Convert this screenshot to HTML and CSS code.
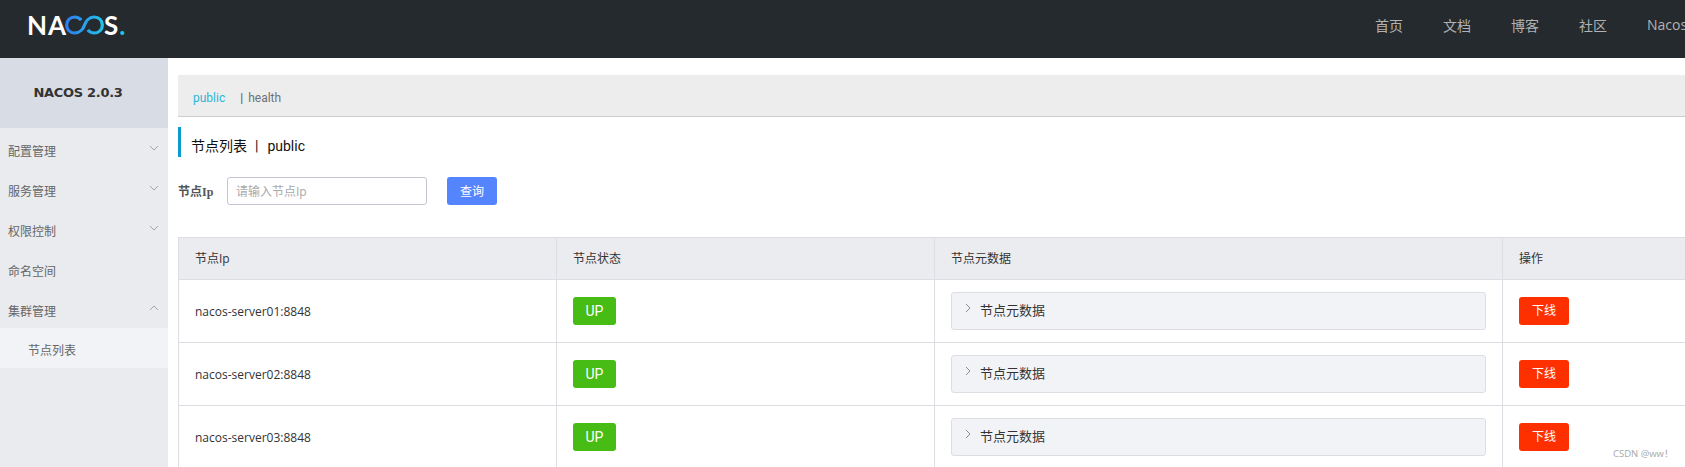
FILE: index.html
```html
<!DOCTYPE html>
<html lang="en">
<head>
  <meta charset="UTF-8">
  <meta name="viewport" content="width=device-width, initial-scale=1.0">
  <title>Nacos</title>
  <link rel="stylesheet" href="styles.css">
</head>
<body>
  <header class="topbar">
    <div class="logo">
      <span class="logo-text">NA</span>
      <svg class="logo-mark" width="39" height="20" viewBox="0 0 36 20" preserveAspectRatio="none" fill="none" aria-hidden="true">
        <defs>
          <linearGradient id="logoGrad" x1="0" y1="0" x2="36" y2="0" gradientUnits="userSpaceOnUse">
            <stop offset="0" stop-color="#2f7bf0"/>
            <stop offset="1" stop-color="#22c4e6"/>
          </linearGradient>
        </defs>
        <path d="M15 5.2C13.600 3.400 11.600 2 9 2 4.800 2 1.500 5.500 1.500 10S4.800 18 9 18c5 0 8-4.500 9-8s4-8 9-8c4.200 0 7.500 3.500 7.500 8s-3.300 8-7.500 8c-2.600 0-4.600-1.400-6-3.200" stroke="url(#logoGrad)" stroke-width="3"/>
      </svg>
      <span class="logo-text">S<span class="logo-dot">.</span></span>
    </div>
    <nav class="topnav">
      <a>首页</a>
      <a>文档</a>
      <a>博客</a>
      <a>社区</a>
      <a>Nacos</a>
    </nav>
  </header>

  <div class="page">
    <aside class="sidebar">
      <div class="version">NACOS 2.0.3</div>
      <ul class="menu">
        <li class="menu-item">配置管理<svg class="chev" width="10" height="6" viewBox="0 0 10 6"><path d="M1 1l4 4 4-4" fill="none" stroke="#a0a4ab"/></svg></li>
        <li class="menu-item">服务管理<svg class="chev" width="10" height="6" viewBox="0 0 10 6"><path d="M1 1l4 4 4-4" fill="none" stroke="#a0a4ab"/></svg></li>
        <li class="menu-item">权限控制<svg class="chev" width="10" height="6" viewBox="0 0 10 6"><path d="M1 1l4 4 4-4" fill="none" stroke="#a0a4ab"/></svg></li>
        <li class="menu-item">命名空间</li>
        <li class="menu-item">集群管理<svg class="chev" width="10" height="6" viewBox="0 0 10 6"><path d="M1 5l4-4 4 4" fill="none" stroke="#a0a4ab"/></svg></li>
        <li class="menu-sub">节点列表</li>
      </ul>
    </aside>

    <main class="content">
      <div class="crumbs">
        <span class="crumb-active">public</span>
        <span class="crumb-sep">|</span>
        <span class="crumb">health</span>
      </div>

      <h2 class="page-title">节点列表<span class="title-sep">|</span>public</h2>

      <form class="search">
        <label class="search-label">节点Ip</label>
        <input class="search-input" type="text" placeholder="请输入节点Ip">
        <button class="btn btn-query" type="button">查询</button>
      </form>

      <table class="nodes">
        <colgroup>
          <col class="col-ip">
          <col class="col-state">
          <col class="col-meta">
          <col>
        </colgroup>
        <thead>
          <tr>
            <th>节点Ip</th>
            <th>节点状态</th>
            <th>节点元数据</th>
            <th>操作</th>
          </tr>
        </thead>
        <tbody>
          <tr>
            <td>nacos-server01:8848</td>
            <td><span class="btn btn-up">UP</span></td>
            <td><div class="meta"><svg width="6" height="10" viewBox="0 0 6 10"><path d="M1 1l4 4-4 4" fill="none" stroke="#8a8e95"/></svg>节点元数据</div></td>
            <td><span class="btn btn-off">下线</span></td>
          </tr>
          <tr>
            <td>nacos-server02:8848</td>
            <td><span class="btn btn-up">UP</span></td>
            <td><div class="meta"><svg width="6" height="10" viewBox="0 0 6 10"><path d="M1 1l4 4-4 4" fill="none" stroke="#8a8e95"/></svg>节点元数据</div></td>
            <td><span class="btn btn-off">下线</span></td>
          </tr>
          <tr>
            <td>nacos-server03:8848</td>
            <td><span class="btn btn-up">UP</span></td>
            <td><div class="meta"><svg width="6" height="10" viewBox="0 0 6 10"><path d="M1 1l4 4-4 4" fill="none" stroke="#8a8e95"/></svg>节点元数据</div></td>
            <td><span class="btn btn-off">下线</span></td>
          </tr>
        </tbody>
      </table>
    </main>
  </div>

  <div class="watermark">CSDN @ww！</div>
</body>
</html>
```

FILE: styles.css
```css
* {
  box-sizing: border-box;
}
html, body {
  height: 467px;
  overflow: hidden;
}
body {
  margin: 0;
  font-family: "Open Sans", "Noto Sans CJK SC", sans-serif;
  font-size: 12px;
  color: #333;
  background: #fff;
}

.topbar {
  display: flex;
  align-items: center;
  height: 58px;
  padding-left: 27px;
  background: #252a2f;
  overflow: hidden;
}
.logo {
  display: flex;
  align-items: center;
  width: 1348px;
  flex-shrink: 0;
  margin-top: -9px;
}
.logo-text {
  font-family: Lato, sans-serif;
  font-size: 26px;
  font-weight: 700;
  color: #fff;
  letter-spacing: 1px;
  line-height: 20px;
}
.logo-dot {
  color: #22c4e6;
}
.logo-mark {
  margin: 0 0 0 -2px;
}
.topnav {
  display: flex;
  gap: 40px;
  flex-shrink: 0;
  margin-top: -9px;
}
.topnav a {
  font-size: 14px;
  color: #b3b3b3;
  white-space: nowrap;
}

.page {
  display: flex;
  height: 409px;
}
.sidebar {
  width: 168px;
  flex-shrink: 0;
  background: #e9ebef;
}
.version {
  height: 70px;
  padding-right: 12px;
  line-height: 70px;
  text-align: center;
  font-family: "DejaVu Sans", sans-serif;
  font-size: 13px;
  font-weight: 700;
  letter-spacing: -0.3px;
  color: #333;
  background: #d8dce4;
}
.menu {
  list-style: none;
  margin: 0;
  padding: 0;
}
.menu-item {
  display: flex;
  align-items: center;
  justify-content: space-between;
  height: 40px;
  padding: 6px 9px 0 8px;
  color: #666;
}
.chev {
  margin-top: -6px;
}
.menu-sub {
  height: 40px;
  padding-left: 28px;
  padding-top: 6px;
  line-height: 34px;
  color: #666;
  background: #f2f3f7;
}

.content {
  flex: 1;
  min-width: 0;
  padding: 17px 0 0 10px;
  overflow: hidden;
}
.crumbs {
  display: flex;
  align-items: center;
  height: 42px;
  padding: 4px 0 0 15px;
  font-family: Roboto, sans-serif;
  background: #ededed;
  border-bottom: 1px solid #ccc;
}
.crumb-active {
  color: #2bb7d8;
}
.crumb-sep {
  margin-left: 15px;
  color: #555;
}
.crumb {
  margin-left: 5px;
  color: #6c7077;
}
.page-title {
  height: 30px;
  margin: 10px 0 20px;
  padding: 7px 0 0 10px;
  line-height: 25px;
  font-family: Roboto, "Noto Sans CJK SC", sans-serif;
  font-size: 14px;
  font-weight: 400;
  color: #111;
  border-left: 3px solid #0a9bd0;
}
.title-sep {
  margin: 0 9px 0 8px;
}
.search {
  display: flex;
  align-items: center;
  height: 28px;
  margin-bottom: 32px;
}
.search-label {
  width: 49px;
  font-family: "Liberation Serif", "Noto Sans CJK SC", serif;
  font-weight: 700;
  color: #555;
}
.search-input {
  width: 200px;
  height: 28px;
  padding: 0 8px;
  font: inherit;
  border: 1px solid #c4c6cf;
  border-radius: 3px;
}
.search-input::placeholder {
  color: #a9a9a9;
}
.btn {
  display: inline-block;
  height: 28px;
  border: 0;
  border-radius: 3px;
  font: inherit;
  line-height: 28px;
  color: #fff;
  text-align: center;
  vertical-align: middle;
}
.btn-query {
  width: 50px;
  margin-left: 20px;
  background: #5584ff;
}
.btn-up {
  width: 43px;
  font-family: Roboto, sans-serif;
  font-size: 14px;
  background: #46bc15;
}
.btn-off {
  width: 50px;
  background: #ff3000;
}

.nodes {
  width: 1508px;
  table-layout: fixed;
  border-collapse: collapse;
  border-left: 1px solid #dcdee3;
  border-top: 1px solid #dcdee3;
}
.col-ip {
  width: 378px;
}
.col-state {
  width: 378px;
}
.col-meta {
  width: 568px;
}
.nodes th {
  height: 42px;
  padding: 0 16px 2px;
  text-align: left;
  font-weight: 400;
  color: #333;
  background: #ebecf0;
  border-right: 1px solid #dcdee3;
  border-bottom: 1px solid #dcdee3;
}
.nodes td {
  height: 63px;
  padding: 0 16px;
  color: #333;
  border-right: 1px solid #dcdee3;
  border-bottom: 1px solid #dcdee3;
}
.meta {
  display: flex;
  align-items: center;
  gap: 9px;
  height: 38px;
  padding: 0 0 4px 13px;
  font-size: 13px;
  color: #333;
  background: #f2f3f7;
  border: 1px solid #dcdee3;
  border-radius: 3px;
}
.meta svg {
  margin-top: -2px;
}

.watermark {
  position: absolute;
  left: 1613px;
  top: 446px;
  font-size: 9.500px;
  color: #a8a8a8;
}
```
